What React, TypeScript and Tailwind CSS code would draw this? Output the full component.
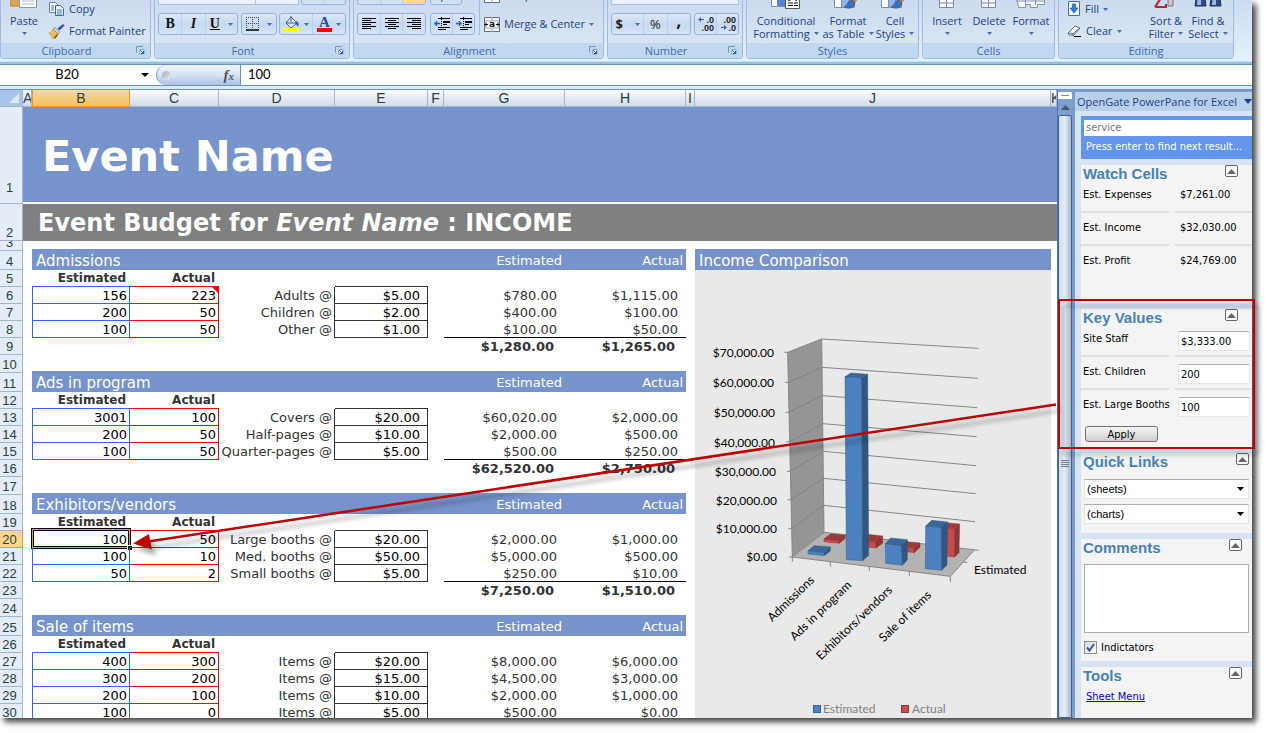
import React from "react";

const RIBBON_FONT = "font-['Open_Sans','Noto_Sans',sans-serif]";

function Tri({ className = "fill-[#4a6fa8]" }: { className?: string }) {
  return (
    <svg width="5" height="3" viewBox="0 0 5 3" className={`shrink-0 ${className}`} aria-hidden="true">
      <path d="M0 0h5L2.5 3z" />
    </svg>
  );
}

function Launcher() {
  return (
    <svg width="9" height="9" viewBox="0 0 9 9" fill="none" aria-hidden="true">
      <path d="M.5 6.500V.5H6.500" stroke="#6f93c0" />
      <path d="M4 3.500h4v4.500H3.500z" fill="#f4f9ff" stroke="#7f9fc8" />
      <path d="M4 4l3.500 3.500M7.500 5v2.500H5" stroke="#2e5c96" />
    </svg>
  );
}

function Group({ title, width, launcher, children }: { title: string; width: string; launcher?: boolean; children: React.ReactNode }) {
  return (
    <section className={`flex h-[74px] shrink-0 flex-col overflow-hidden rounded-[3px] border border-[#9dbbe0] bg-gradient-to-b from-[#c8d8ed] to-[#dbe8f5] ${width}`}>
      <div className="flex min-h-0 flex-1 items-end px-[3px] pb-[8px]">{children}</div>
      <div className={`relative flex h-[15px] shrink-0 items-center justify-center bg-[#c1d8f0] text-[11px] leading-[15px] text-[#3e6aaa] ${launcher ? "pr-[18px]" : ""}`}>
        <span>{title}</span>
        {launcher && (
          <button aria-label={`${title} settings`} className="absolute right-[5px] top-[3px]">
            <Launcher />
          </button>
        )}
      </div>
    </section>
  );
}

function Cluster({ width, short, children }: { width: string; short?: boolean; children?: React.ReactNode }) {
  return (
    <div className={`flex items-stretch divide-x divide-[#b9cfea] overflow-hidden rounded-[3px] border border-[#94b3dc] bg-gradient-to-b from-[#dce8f7] via-[#c6d9f0] to-[#d5e4f5] ${short ? "h-[20px]" : "h-[22px]"} ${width}`}>
      {children}
    </div>
  );
}

function Tool({ label, children, className = "" }: { label: string; children: React.ReactNode; className?: string }) {
  return (
    <button aria-label={label} className={`flex flex-1 items-center justify-center gap-1 ${className}`}>
      {children}
    </button>
  );
}

function Lines({ widths, align }: { widths: number[]; align: "l" | "c" | "r" }) {
  return (
    <svg width="14" height="12" viewBox="0 0 14 12" aria-hidden="true">
      {widths.map((w, i) => (
        <rect key={i} x={align === "l" ? 0 : align === "r" ? 14 - w : (14 - w) / 2} y={i * 2} width={w} height="1" fill="#000" />
      ))}
    </svg>
  );
}

function Indent({ flip }: { flip?: boolean }) {
  return (
    <svg width="16" height="14" viewBox="0 0 16 14" aria-hidden="true">
      <path d="M7.500 0v14" stroke="#000" strokeDasharray="1 1" />
      <path d="M4 1.500h12M9 4.500h7M9 7.500h4M4 10.500h12M4 12.500h8" stroke="#000" />
      <path d="M9 4h7v2H9z" />
      <path d={flip ? "M6 6.500L3 4v2H0v1h3v2z" : "M0 6.500L3 4v2h3v1H3v2z"} fill="#2f63c0" stroke="#2f63c0" strokeWidth=".5" />
    </svg>
  );
}

function BigButton({ lines, icon, arrowBelow, width }: { lines: string[]; icon: React.ReactNode; arrowBelow?: boolean; width: string }) {
  return (
    <button className={`flex flex-col items-center text-[11px] leading-[13px] text-[#1b3f84] ${width}`}>
      <span className="mb-[5px] flex h-[30px] items-end">{icon}</span>
      <span className="whitespace-nowrap">{lines[0]}</span>
      <span className="flex h-[13px] items-center gap-1 whitespace-nowrap">
        {!arrowBelow && lines[1]}
        <Tri />
      </span>
    </button>
  );
}

function GridIcon({ brush }: { brush?: boolean }) {
  return (
    <svg width="28" height="26" viewBox="0 0 28 26" aria-hidden="true">
      <path d="M.5.5h20v24H.5z" fill="#fff" stroke="#7e8fae" />
      <path d="M8 8h12v16H8z" fill="#8fb4ea" />
      <path d="M.5 8h20M.5 16h20M7.500.5v24M14.500.5v24" stroke="#7e8fae" fill="none" />
      {brush && (
        <>
          <path d="M27 8L17 18l3 3 8-10z" fill="#c77a3c" />
          <path d="M18 17c-4 0-4 5-8 7 4 2 10 2 11-4z" fill="#3f6fb5" stroke="#2a4f8d" strokeWidth=".6" />
        </>
      )}
    </svg>
  );
}

function CondIcon() {
  return (
    <svg width="30" height="26" viewBox="0 0 30 26" aria-hidden="true">
      <path d="M.5.5h22v23H.5z" fill="#fff" stroke="#7e8fae" />
      <path d="M6 0h8v23H6z" fill="#4f82dc" />
      <path d="M14.500 11.500h14v14h-14z" fill="#fff" stroke="#555" />
      <path d="M17 14l4 2-4 2M17 20h5M17 22.500h5M26 14l-3 2 3 2M23 20h4M23 22.500h4" stroke="#111" fill="none" />
    </svg>
  );
}

function CellsIcon({ wide }: { wide?: boolean }) {
  return wide ? (
    <svg width="32" height="26" viewBox="0 0 32 26" aria-hidden="true">
      <path d="M1.500 14.500h28v7h-7v3h-7v-3h-5v3h-7z" fill="#f5f8fd" stroke="#8592a8" />
      <path d="M10.500 14v8M20.500 14v8M1 18h29" stroke="#8592a8" />
    </svg>
  ) : (
    <svg width="16" height="26" viewBox="0 0 16 26" aria-hidden="true">
      <path d="M.5 8.500h14v16H.5z" fill="#f8fafd" stroke="#7c8ba5" />
      <path d="M.5 20h14M7.500 8v16" stroke="#7c8ba5" />
    </svg>
  );
}

function Ribbon() {
  return (
    <header className={`flex h-[61px] shrink-0 items-end gap-[3px] overflow-hidden bg-gradient-to-b from-[#cbdcf0] to-[#e4f1fd] pb-[2px] ${RIBBON_FONT}`}>
      <Group title="Clipboard" width="w-[151px]" launcher>
        <div className="-mb-[5px] flex flex-1 items-end">
          <BigButton
            width="w-[40px]"
            lines={["Paste"]}
            arrowBelow
            icon={
              <svg width="28" height="26" viewBox="0 0 28 26" aria-hidden="true">
                <path d="M0 0h22v23H0z" fill="#dba653" stroke="#b5812f" />
                <path d="M9.500 4.500h17v20h-17z" fill="#fff" stroke="#8a97b0" />
                <path d="M12 9h12M12 12h12M12 15h12M12 18h12M12 21h12" stroke="#a9b7d0" />
              </svg>
            }
          />
          <div className="-mb-[2px] ml-[5px] flex flex-col text-[11px] leading-[22px] text-[#1b3f84]">
            <button className="flex h-[22px] items-center gap-[5px]">
              <svg width="15" height="14" viewBox="0 0 15 14" aria-hidden="true">
                <path d="M.5.5h6l2 2v8h-8z" fill="#fff" stroke="#5c7fb8" />
                <path d="M6.500 3.500h5l3 3v7h-8z" fill="#e9f1fc" stroke="#3f67a8" />
                <path d="M2 4h3M2 6h3M2 8h3M8 8h5M8 10h5M8 12h5" stroke="#4b79c4" />
              </svg>
              Copy
            </button>
            <button className="flex h-[22px] items-center gap-[4px] whitespace-nowrap">
              <svg width="16" height="15" viewBox="0 0 16 15" aria-hidden="true">
                <path d="M14 0l1.500 1.500-5 5-2-2z" fill="#3d4f94" />
                <path d="M6 3l5 5-2 2-5-5z" fill="#c4cad6" stroke="#77809a" strokeWidth=".6" />
                <path d="M4 5l5 5c-1 3-3 4-5 5-1-3-3-5-4-6 2 0 3-2 4-4z" fill="#f0c14c" stroke="#b4802c" strokeWidth=".6" />
                <path d="M5 13l3-3 1 1-3 4z" fill="#8a4e1c" />
              </svg>
              Format Painter
            </button>
          </div>
        </div>
      </Group>

      <Group title="Font" width="w-[196px]" launcher>
        <div className="flex flex-1 flex-col gap-2">
          <div className="flex justify-between">
            <div className="flex h-[20px] border border-[#a9c2e3] bg-[#eaf2fb]">
              <span className="w-[97px] border-r border-[#a9c2e3]" />
              <span className="w-[42px]" />
            </div>
            <Cluster width="w-[45px]" short>
              <Tool label="Grow font" className="font-['Liberation_Serif',serif] text-[15px] font-bold">A</Tool>
              <Tool label="Shrink font" className="font-['Liberation_Serif',serif] text-[13px] font-bold">A</Tool>
            </Cluster>
          </div>
          <div className="flex justify-between font-['Liberation_Serif',serif] text-[14px] leading-none text-[#111]">
            <Cluster width="w-[80px]">
              <Tool label="Bold"><b>B</b></Tool>
              <Tool label="Italic"><b><i>I</i></b></Tool>
              <Tool label="Underline" className="grow-[1.4]"><b className="underline">U</b><Tri className="ml-1 fill-[#4a6fa8]" /></Tool>
            </Cluster>
            <Cluster width="w-[36px]">
              <Tool label="Borders">
                <svg width="13" height="14" viewBox="0 0 13 14" aria-hidden="true">
                  <path d="M0 .5h13M0 6.500h13M.5 0v12M6.500 0v12M12.500 0v12" stroke="#444" strokeDasharray="1 1" />
                  <path d="M0 13h13" stroke="#000" strokeWidth="1.500" />
                </svg>
                <Tri className="ml-1 fill-[#4a6fa8]" />
              </Tool>
            </Cluster>
            <Cluster width="w-[67px]">
              <Tool label="Fill color">
                <svg width="17" height="16" viewBox="0 0 17 16" aria-hidden="true">
                  <path d="M8 1l6 6-6 5-5-5z" fill="#dfe9f6" stroke="#3c5f96" />
                  <path d="M8 0v6M3 7h11" stroke="#3c5f96" />
                  <path d="M13 5c3 1 3 3 2 6-1-2-2-3-3-3z" fill="#2f66b8" />
                  <path d="M0 12h16v4H0z" fill="#ff0" />
                </svg>
                <Tri />
              </Tool>
              <Tool label="Font color">
                <span className="flex flex-col items-center">
                  <b className="h-[12px] text-[15px] leading-[12px] text-[#26508f]">A</b>
                  <span className="h-[4px] w-[15px] bg-[#f00]" />
                </span>
                <Tri />
              </Tool>
            </Cluster>
          </div>
        </div>
      </Group>

      <Group title="Alignment" width="w-[251px]" launcher>
        <div className="flex flex-1 items-end gap-[4px]">
          <div className="flex flex-col gap-2">
            <div className="flex gap-[4px]">
              <Cluster width="w-[69px]" short>
                <span className="flex-1" />
                <span className="flex-1" />
                <span className="flex flex-1 items-end justify-center bg-[#fbd98c] pb-[4px]"><span className="h-px w-[12px] bg-black" /></span>
              </Cluster>
              <Cluster width="w-[32px]" short>
                <Tool label="Orientation">
                  <svg width="12" height="16" viewBox="0 0 12 16" aria-hidden="true"><path d="M1 15L10 3M6 3h4v4" fill="none" stroke="#444" /></svg>
                </Tool>
              </Cluster>
            </div>
            <div className="flex gap-[4px]">
              <Cluster width="w-[69px]">
                <Tool label="Align left"><Lines align="l" widths={[14, 9, 14, 9, 14, 9]} /></Tool>
                <Tool label="Align center"><Lines align="c" widths={[14, 8, 14, 8, 14, 8]} /></Tool>
                <Tool label="Align right"><Lines align="r" widths={[14, 9, 14, 9, 14, 9]} /></Tool>
              </Cluster>
              <Cluster width="w-[45px]">
                <Tool label="Decrease indent"><Indent /></Tool>
                <Tool label="Increase indent"><Indent flip /></Tool>
              </Cluster>
            </div>
          </div>
          <div className="h-[60px] w-px bg-[#9dbbe0]" />
          <div className="flex flex-col gap-2 text-[11px] leading-[22px] text-[#1b3f84]">
            <button className="flex h-[20px] items-center gap-1"><MergeIcon />Wrap Text</button>
            <button className="flex h-[22px] items-center gap-1 whitespace-nowrap">
              <MergeIcon />
              Merge &amp; Center
              <Tri />
            </button>
          </div>
        </div>
      </Group>

      <Group title="Number" width="w-[136px]" launcher>
        <div className="flex flex-1 flex-col gap-2">
          <div className="h-[20px] border border-[#a9c2e3] bg-[#eaf2fb]" />
          <div className="flex justify-between text-[13px] leading-none text-[#222]">
            <Cluster width="w-[80px]">
              <Tool label="Currency" className="grow-[1.4]"><b>$</b><Tri className="ml-2 fill-[#4a6fa8]" /></Tool>
              <Tool label="Percent">%</Tool>
              <Tool label="Comma" className="pb-[8px] text-[18px]"><b>,</b></Tool>
            </Cluster>
            <Cluster width="w-[45px]">
              <Tool label="Increase decimal"><Decimals /></Tool>
              <Tool label="Decrease decimal"><Decimals less /></Tool>
            </Cluster>
          </div>
        </div>
      </Group>

      <Group title="Styles" width="w-[173px]">
        <div className="-mb-[5px] flex flex-1 items-end justify-between">
          <BigButton width="w-[72px]" lines={["Conditional", "Formatting"]} icon={<CondIcon />} />
          <BigButton width="w-[52px]" lines={["Format", "as Table"]} icon={<GridIcon brush />} />
          <BigButton width="w-[42px]" lines={["Cell", "Styles"]} icon={<GridIcon brush />} />
        </div>
      </Group>

      <Group title="Cells" width="w-[133px]">
        <div className="-mb-[5px] flex flex-1 items-end justify-between">
          <BigButton width="w-[42px]" lines={["Insert"]} arrowBelow icon={<CellsIcon />} />
          <BigButton width="w-[42px]" lines={["Delete"]} arrowBelow icon={<CellsIcon />} />
          <BigButton width="w-[42px]" lines={["Format"]} arrowBelow icon={<CellsIcon wide />} />
        </div>
      </Group>

      <Group title="Editing" width="w-[176px]">
        <div className="-mb-[5px] flex flex-1 items-end">
          <div className="-mb-[2px] ml-[5px] flex w-[78px] flex-col text-[11px] leading-[22px] text-[#1b3f84]">
            <button className="flex h-[22px] items-center gap-1">
              <svg width="14" height="16" viewBox="0 0 14 16" aria-hidden="true">
                <path d="M1.500.5h11v14h-11z" fill="#eef4fc" stroke="#4a6ea9" />
                <path d="M5.500 3h3v4h2.500L7 12 3 7h2.500z" fill="#3b78d8" stroke="#1e4f9f" strokeWidth=".6" />
              </svg>
              Fill
              <Tri />
            </button>
            <button className="flex h-[22px] items-center gap-1">
              <svg width="15" height="12" viewBox="0 0 15 12" aria-hidden="true">
                <path d="M1 8l7-7 5 2-6 7H2z" fill="#fff" stroke="#5d6b80" />
                <path d="M1 8l5 .5L13 3M6 8.500V11" stroke="#5d6b80" fill="none" />
                <path d="M7 11.500h7" stroke="#000" />
              </svg>
              Clear
              <Tri />
            </button>
          </div>
          <BigButton
            width="w-[42px]"
            lines={["Sort &", "Filter"]}
            icon={
              <svg width="24" height="26" viewBox="0 0 24 26" aria-hidden="true">
                <path d="M1 24l8-12H2v-2h11M1 24h11v-3" fill="none" stroke="#b02a30" strokeWidth="2.200" />
                <path d="M14 12h5v11h-5z" fill="#c9c9c9" stroke="#777" />
              </svg>
            }
          />
          <BigButton
            width="w-[42px]"
            lines={["Find &", "Select"]}
            icon={
              <svg width="28" height="26" viewBox="0 0 28 26" aria-hidden="true">
                <path d="M3 8h7l2 15H1zM18 8h7l2 15H16z" fill="#2c4a80" stroke="#1b3059" />
                <path d="M4 10h3v12H3zM19 10h3v12h-4z" fill="#9db6dc" />
              </svg>
            }
          />
        </div>
      </Group>
    </header>
  );
}

function MergeIcon() {
  return (
    <svg width="16" height="15" viewBox="0 0 16 15" className="shrink-0" aria-hidden="true">
      <path d="M.5.5h15v14H.5z" fill="#fff" stroke="#666f80" />
      <path d="M1 4h14M1 11h14M8 0v4M8 11v4" stroke="#8fa6c8" />
      <path d="M0 7.500h4M12 7.500h4M2 5.500v4M14 5.500v4" stroke="#111" />
      <text x="8" y="10" textAnchor="middle" fontSize="9" fontWeight="700" fontFamily="DejaVu Sans" fill="#111">a</text>
    </svg>
  );
}

function Decimals({ less }: { less?: boolean }) {
  return (
    <svg width="18" height="16" viewBox="0 0 18 16" className="font-['Liberation_Sans',sans-serif] text-[9px]" aria-hidden="true">
      <text x="17" y="7" textAnchor="end" fill="#222" fontWeight="700">{less ? ".00" : ".0"}</text>
      <text x="17" y="15" textAnchor="end" fill="#222" fontWeight="700">{less ? ".0" : ".00"}</text>
      <path d={less ? "M8 11.500L5 9v2H2v1h3v2z" : "M1 3.500L4 1v2h3v1H4v2z"} fill="#2f63c0" />
    </svg>
  );
}

function FormulaBar() {
  return (
    <div className="flex h-[28px] shrink-0 flex-col border-t-2 border-[#9dbde3]">
      <div className="flex h-[22px] border-y border-[#6a93c4] bg-white font-['Lato',sans-serif] text-[13px] text-black">
        <input aria-label="Name box" defaultValue="B20" className="w-[134px] text-center" />
        <button aria-label="Open name list" className="flex w-[22px] items-center justify-center">
          <svg width="8" height="4" viewBox="0 0 8 4" aria-hidden="true"><path d="M0 0h8L4 4z" /></svg>
        </button>
        <div className="flex w-[85px] items-center justify-between rounded-l-full border-x border-[#6a93c4] bg-gradient-to-b from-[#f3f7fc] via-[#d7e3f3] to-[#a9c2e4] pl-[5px] pr-[6px]">
          <span className="h-[9px] w-[9px] rounded-full bg-gradient-to-br from-[#a2a9b5] to-[#eef1f6]" />
          <button aria-label="Insert function" className="font-['Liberation_Serif',serif] text-[15px] font-bold italic leading-none text-[#555]">
            f<span className="text-[11px]">x</span>
          </button>
        </div>
        <input aria-label="Formula" defaultValue="100" className="min-w-0 flex-1 pl-[7px]" />
      </div>
      <div className="h-[4px] border-b border-[#6a93c4] bg-[#dfe9f4]" />
    </div>
  );
}

type Item = { est: string; act: string; label: string; price: string; e: string; a: string };
type Section = { title: string; first: number; items: Item[]; totals?: [string, string] };

const it = (est: string, act: string, label: string, price: string, e: string, a: string): Item => ({ est, act, label, price, e, a });

const SECTIONS: Section[] = [
  {
    title: "Admissions",
    first: 4,
    items: [
      it("156", "223", "Adults @", "$5.00", "$780.00", "$1,115.00"),
      it("200", "50", "Children @", "$2.00", "$400.00", "$100.00"),
      it("100", "50", "Other @", "$1.00", "$100.00", "$50.00"),
    ],
    totals: ["$1,280.00", "$1,265.00"],
  },
  {
    title: "Ads in program",
    first: 11,
    items: [
      it("3001", "100", "Covers @", "$20.00", "$60,020.00", "$2,000.00"),
      it("200", "50", "Half-pages @", "$10.00", "$2,000.00", "$500.00"),
      it("100", "50", "Quarter-pages @", "$5.00", "$500.00", "$250.00"),
    ],
    totals: ["$62,520.00", "$2,750.00"],
  },
  {
    title: "Exhibitors/vendors",
    first: 18,
    items: [
      it("100", "50", "Large booths @", "$20.00", "$2,000.00", "$1,000.00"),
      it("100", "10", "Med. booths @", "$50.00", "$5,000.00", "$500.00"),
      it("50", "2", "Small booths @", "$5.00", "$250.00", "$10.00"),
    ],
    totals: ["$7,250.00", "$1,510.00"],
  },
  {
    title: "Sale of items",
    first: 25,
    items: [
      it("400", "300", "Items @", "$20.00", "$8,000.00", "$6,000.00"),
      it("300", "200", "Items @", "$15.00", "$4,500.00", "$3,000.00"),
      it("200", "100", "Items @", "$10.00", "$2,000.00", "$1,000.00"),
      it("100", "0", "Items @", "$5.00", "$500.00", "$0.00"),
    ],
  },
];

const HEAD_CELL = "border-b border-r pr-[3px] text-center font-['Liberation_Sans',sans-serif] text-[13px] font-normal leading-[15px]";

function RowHead({ n, className = "" }: { n: number; className?: string }) {
  const active = n === 20;
  return (
    <th
      scope="row"
      className={`${HEAD_CELL} align-bottom text-[#27413e] ${active ? "border-[#f29536] bg-[#ffd58d]" : "border-[#9eb6ce] bg-[#e4ecf7]"} ${className}`}
    >
      {n}
    </th>
  );
}

const BAND = "bg-[#7693cb] shadow-[0_-2px_0_#7693cb] text-white";
const BOXED = "border-b pt-px leading-[15px]";

function SectionRows({ s }: { s: Section }) {
  const f = s.first;
  return (
    <>
      <tr className="h-[19px]">
        <RowHead n={f} />
        <td />
        <td colSpan={5} className={`${BAND} pl-[4px] text-left text-[15px] leading-[18px]`}>{s.title}</td>
        <td className={`${BAND} pr-[3px] leading-[18px]`}>Estimated</td>
        <td className={`${BAND} pr-[3px] leading-[18px]`}>Actual</td>
        <td />
        {f === 4 && <td className={`${BAND} pl-[4px] text-left text-[15px] leading-[18px]`}>Income Comparison</td>}
        {f === 4 && <td />}
      </tr>
      <tr className="h-[17px]">
        <RowHead n={f + 1} />
        <td />
        <td className={`${BOXED} border-[#3366ff] pr-[4px] text-[12px] font-bold`}>Estimated</td>
        <td className={`${BOXED} border-[#ff0000] pr-[4px] text-[12px] font-bold`}>Actual</td>
        <td />
        <td className="border-b border-[#333]" />
        <td colSpan={4} />
        {f === 4 && (
          <td rowSpan={26} className="bg-[#e9e9e9] align-top">
            <Chart />
          </td>
        )}
      </tr>
      {s.items.map((r, i) => {
        const sum = i === 2 && s.totals ? `${BOXED} border-black` : "";
        const selected = f + 2 + i === 20;
        return (
          <tr key={i} className="h-[17px]">
            <RowHead n={f + 2 + i} />
            <td />
            <td className={`${BOXED} relative border-x border-[#3366ff] pr-[2px] text-black`}>
              {r.est}
              {selected && (
                <span className="pointer-events-none absolute -inset-x-[2px] -bottom-[2px] -top-[3px] border-[3px] border-black outline-1 -outline-offset-2 outline-[#d9a520]">
                  <span className="absolute -bottom-[4px] -right-[4px] h-[5px] w-[5px] border-l border-t border-white bg-black" />
                </span>
              )}
            </td>
            <td className={`${BOXED} relative border-r border-[#ff0000] pr-[2px] text-black`}>
              {r.act}
              {f === 4 && i === 0 && (
                <svg className="absolute right-0 top-0" width="6" height="6" viewBox="0 0 6 6" aria-hidden="true"><path d="M0 0h6v6z" fill="#f00" /></svg>
              )}
            </td>
            <td className="whitespace-nowrap border-r border-[#333] pr-[2px]">{r.label}</td>
            <td className={`${BOXED} border-r border-[#333] pr-[7px] text-black`}>{r.price}</td>
            <td />
            <td className={`pr-[8px] ${sum}`}>{r.e}</td>
            <td className={`pr-[8px] ${sum}`}>{r.a}</td>
            <td />
          </tr>
        );
      })}
      {s.totals && (
        <>
          <tr className="h-[17px] font-bold">
            <RowHead n={f + 5} />
            <td colSpan={6} />
            <td className="pr-[11px]">{s.totals[0]}</td>
            <td className="pr-[11px]">{s.totals[1]}</td>
            <td />
          </tr>
          <tr className="h-[18px]">
            <RowHead n={f + 6} />
            <td colSpan={9} />
          </tr>
        </>
      )}
    </>
  );
}

const COLUMNS = ["A", "B", "C", "D", "E", "F", "G", "H", "I", "J", "K"];

function Sheet() {
  return (
    <div className="min-w-0 flex-1 overflow-hidden bg-white">
      <table className="w-full table-fixed border-separate border-spacing-0 text-right font-['DejaVu_Sans',sans-serif] text-[13px] leading-[16px] text-[#333]">
        <colgroup>
          <col className="w-[23px]" />
          <col className="w-[9px]" />
          <col className="w-[98px]" />
          <col className="w-[89px]" />
          <col className="w-[116px]" />
          <col className="w-[93px]" />
          <col className="w-[16px]" />
          <col className="w-[121px]" />
          <col className="w-[121px]" />
          <col className="w-[9px]" />
          <col />
          <col className="w-[6px]" />
        </colgroup>
        <thead>
          <tr className="h-[17px] font-['Liberation_Sans',sans-serif] text-[14px] text-[#27413e]">
            <th className="border-b border-r border-[#9eb6ce] bg-[#a9c4e9]" aria-label="Select all">
              <svg className="ml-auto mr-[3px]" width="10" height="10" viewBox="0 0 10 10" aria-hidden="true"><path d="M10 0v10H0z" fill="#dfe9f5" /></svg>
            </th>
            {COLUMNS.map((c) => (
              <th
                key={c}
                scope="col"
                className={
                  c === "B"
                    ? "overflow-hidden border-x border-b border-[#f29536] bg-gradient-to-b from-[#f9d99f] to-[#f1c15f] text-center font-normal"
                    : "overflow-hidden border-b border-r border-[#9eb6ce] bg-gradient-to-b from-[#f9fcfd] to-[#d3dbe9] text-center font-normal"
                }
              >
                {c}
              </th>
            ))}
          </tr>
        </thead>
        <tbody>
          <tr className="h-[97px]">
            <RowHead n={1} className="pb-[8px]" />
            <td colSpan={11} className="border-b-2 border-white bg-[#7693cb] pl-[19px] pt-[2px] text-left text-[43px] font-bold leading-[50px] text-white">Event Name</td>
          </tr>
          <tr className="h-[37px]">
            <RowHead n={2} />
            <td colSpan={11} className="bg-[#808080] pl-[15px] text-left text-[24px] font-bold leading-[30px] text-white">
              Event Budget for <i>Event Name</i> : INCOME
            </td>
          </tr>
          <tr className="h-[10px]">
            <th scope="row" className={`${HEAD_CELL} border-[#9eb6ce] bg-[#e4ecf7] text-[#27413e]`}>
              <div className="flex h-[9px] items-end justify-center overflow-hidden">3</div>
            </th>
            <td colSpan={11} />
          </tr>
          {SECTIONS.map((s) => (
            <SectionRows key={s.title} s={s} />
          ))}
        </tbody>
      </table>
    </div>
  );
}

const AXIS: [string, number, number][] = [
  ["$70,000.00", 79, 87],
  ["$60,000.00", 79, 117],
  ["$50,000.00", 80, 147],
  ["$40,000.00", 80, 177],
  ["$30,000.00", 81, 206],
  ["$20,000.00", 82, 235],
  ["$10,000.00", 82, 263],
  ["$0.00", 82, 291],
];

const CATEGORIES: [string, number, number][] = [
  ["Admissions", 120, 311],
  ["Ads in program", 157, 316],
  ["Exhibitors/vendors", 198, 321],
  ["Sale of items", 237, 326],
];

const GRID = [
  [293, 97, 395, 57, 865, 85],
  [295, 187, 395, 142, 864, 175],
  [297, 277, 397, 227, 862, 263],
  [299, 365, 399, 311, 860, 350],
  [301, 454, 400, 394, 858, 437],
  [303, 539, 401, 475, 857, 521],
  [305, 626, 401, 556, 855, 605],
  [307, 711, 402, 637, 866, 691],
];

function Bar({ top, front, side, red }: { top: string; front: string; side: string; red?: boolean }) {
  return (
    <g strokeWidth="1.500" strokeLinejoin="round">
      <polygon points={front} fill={red ? "#c84b4b" : "#4c80bf"} stroke={red ? "#9c3437" : "#386396"} />
      <polygon points={side} fill={red ? "#8e3537" : "#315780"} stroke={red ? "#8e3537" : "#315780"} />
      <polygon points={top} fill={red ? "#9c3a3c" : "#3c6899"} stroke={red ? "#8e3537" : "#315780"} />
    </g>
  );
}

function Chart() {
  return (
    <svg width="356" height="448" viewBox="0 0 356 448" className="block font-['Lato',sans-serif] text-[12px]" role="img" aria-label="Income Comparison">
      <g transform="translate(-5 50) scale(.33333)">
        <polygon points="293,97 395,57 402,637 307,711" fill="#959595" />
        <polygon points="307,711 402,637 853,690 781,769" fill="#b3b3b3" />
        {GRID.map(([x1, y1, x2, y2, x3, y3]) => (
          <g key={y1} fill="none" strokeWidth="3">
            <path d={`M${x2} ${y2}L${x3} ${y3}`} stroke="#868686" />
            <path d={`M${x1} ${y1}L${x2} ${y2}`} stroke="#828282" />
            <path d={`M${x1 - 10} ${y1}h10`} stroke="#868686" />
          </g>
        ))}
        <path d="M293 97L307 711 781 769 853 690M307 711v15M421 725v15M538 740v14M658 754v14M781 769v17M820 727h12M395 57L402 637" fill="none" stroke="#868686" strokeWidth="3" />
        <Bar red top="402,657 422,641 466,646 448,662" front="402,657 448,662 448,670 402,665" side="448,662 466,646 466,655 448,670" />
        <Bar red top="512,660 533,643 578,648 558,664" front="512,660 558,664 558,684 512,679" side="558,664 578,648 578,670 558,684" />
        <Bar red top="628,678 646,665 690,669 673,684" front="628,680 673,684 673,698 628,692" side="673,684 690,669 690,682 673,698" />
        <Bar red top="748,622 766,608 809,612 794,627" front="748,622 794,627 794,711 748,706" side="794,627 809,612 807,698 794,711" />
        <Bar top="354,692 372,677 421,681 403,697" front="354,692 403,697 403,707 354,702" side="403,697 421,681 421,693 403,707" />
        <Bar top="465,170 483,159 533,163 515,174" front="465,170 515,174 518,722 469,719" side="515,174 533,163 536,706 518,722" />
        <Bar top="586,671 602,654 652,659 635,677" front="586,671 635,677 637,736 587,730" side="635,677 652,659 652,720 637,736" />
        <Bar top="707,618 725,601 773,606 755,622" front="707,618 755,622 755,751 706,746" side="755,622 773,606 771,735 755,751" />
      </g>
      {AXIS.map(([t, x, y]) => (
        <text key={t} x={x} y={y} textAnchor="end">{t}</text>
      ))}
      {CATEGORIES.map(([t, x, y]) => (
        <text key={t} x={x} y={y} textAnchor="end" transform={`rotate(-44 ${x} ${y})`}>{t}</text>
      ))}
      <text x="279" y="304">Estimated</text>
      <rect x="118.500" y="435.500" width="7" height="7" fill="#4c80bf" stroke="#386396" />
      <text x="128" y="443" fill="#7f7f7f">Estimated</text>
      <rect x="206.500" y="435.500" width="7" height="7" fill="#c84b4b" stroke="#9c3437" />
      <text x="217" y="443" fill="#7f7f7f">Actual</text>
    </svg>
  );
}

function Scrollbar() {
  return (
    <div className="flex w-[15px] shrink-0 flex-col border-l border-[#4a74b8] bg-[#7f9fcb]">
      <div className="mt-[2px] flex h-[7px] items-center justify-center rounded-[1px] bg-white"><span className="h-px w-[8px] bg-[#7691b8]" /></div>
      <button aria-label="Scroll up" className="flex h-[16px] items-center justify-center">
        <svg width="9" height="5" viewBox="0 0 9 5" aria-hidden="true"><path d="M4.500 0L9 5H0z" fill="#3f5575" /></svg>
      </button>
      <div className="flex flex-1 justify-center rounded-t-[2px] border border-[#48628c] bg-gradient-to-r from-[#cfdcec] via-[#e6ecf4] to-[#a3b7d0] pt-[344px]">
        <span className="h-[8px] w-[8px] bg-[repeating-linear-gradient(#6d7f97_0_1px,transparent_1px_2px)]" />
      </div>
    </div>
  );
}

function Panel({ title, inset, children, className = "" }: { title: string; inset: string; children: React.ReactNode; className?: string }) {
  return (
    <section className={`bg-[#f4f4f4] ${className}`}>
      <div className="flex h-[15px] items-start justify-between pl-[2px]">
        <h2 className="font-['Liberation_Sans',sans-serif] text-[15px] font-bold leading-[18px] text-[#4682b4]">{title}</h2>
        <button aria-label={`Collapse ${title}`} className={`flex h-[12px] w-[13px] items-center justify-center rounded-[2px] border border-[#666] bg-white ${inset}`}>
          <svg width="9" height="5" viewBox="0 0 9 5" aria-hidden="true"><path d="M4.500 0L9 5H0z" fill="#666" /></svg>
        </button>
      </div>
      {children}
    </section>
  );
}

function PaneRow({ label, htmlFor, last, children }: { label: string; htmlFor?: string; last?: boolean; children: React.ReactNode }) {
  const line = last ? "" : "border-b-2 border-[#e0e0e0]";
  return (
    <div className="grid h-[33px] grid-cols-[88px_1fr] gap-x-[6px]">
      <div className={`whitespace-nowrap pl-[2px] pt-[7px] ${line}`}>
        {htmlFor ? <label htmlFor={htmlFor}>{label}</label> : label}
      </div>
      <div className={line}>{children}</div>
    </div>
  );
}

const WATCH: [string, string][] = [
  ["Est. Expenses", "$7,261.00"],
  ["Est. Income", "$32,030.00"],
  ["Est. Profit", "$24,769.00"],
];
const KEYS: [string, string][] = [
  ["Site Staff", "$3,333.00"],
  ["Est. Children", "200"],
  ["Est. Large Booths", "100"],
];

function Pick({ label }: { label: string }) {
  return (
    <div className="relative mx-[3px]">
      <select aria-label={label} className="block h-[20px] w-full appearance-none border border-[#dfe3ea] border-t-[#abadb3] bg-white pl-[2px] font-['Liberation_Sans',sans-serif] text-[11px] leading-[18px]">
        <option>{label}</option>
      </select>
      <svg className="pointer-events-none absolute right-[5px] top-[8px]" width="7" height="4" viewBox="0 0 7 4" aria-hidden="true"><path d="M0 0h7L3.500 4z" /></svg>
    </div>
  );
}

function PowerPane() {
  return (
    <aside className="flex w-[180px] shrink-0 flex-col overflow-hidden border-l-[3px] border-[#7b9bc9] bg-[#d6e4f2] font-['DejaVu_Sans_Condensed','DejaVu_Sans',sans-serif] text-[11px] leading-[16px] text-black">
      <div className={`flex h-[21px] shrink-0 items-center justify-between border-t-2 border-[#7b9bc9] bg-[#b9d0ea] pl-[2px] text-[11px] text-[#1b3f84] ${RIBBON_FONT}`}>
        <span className="whitespace-nowrap">OpenGate PowerPane for Excel</span>
        <button aria-label="Pane menu">
          <svg width="8" height="5" viewBox="0 0 8 5" aria-hidden="true"><path d="M0 0h8L4 5z" fill="#1b3f84" /></svg>
        </button>
      </div>
      <div className="mt-[5px] flex flex-col gap-[6px] pl-[6px]">
        <div className="h-[43px] bg-[#6495ed] pl-[3px] pt-[4px]">
          <input aria-label="Search" defaultValue="service" className="block h-[16px] w-full bg-white pl-[2px] text-[#777]" />
          <p className="whitespace-nowrap pl-[2px] pt-[3px] text-white">Press enter to find next result...</p>
        </div>
        <Panel title="Watch Cells" inset="mr-[14px]" className="h-[138px]">
          {WATCH.map(([l, v], i) => (
            <PaneRow key={l} label={l} last={i === 2}><div className="pl-[5px] pt-[7px]">{v}</div></PaneRow>
          ))}
        </Panel>
        <Panel title="Key Values" inset="mr-[14px]" className="h-[138px]">
          {KEYS.map(([l, v], i) => (
            <PaneRow key={l} label={l} htmlFor={`key-${i}`} last={i === 2}>
              <div className="pl-[3px] pr-[2px] pt-[7px]">
                <input id={`key-${i}`} defaultValue={v} className="block h-[20px] w-full rounded-[2px] border border-[#e2e6ee] border-t-[#abadb3] bg-white pl-[2px]" />
              </div>
            </PaneRow>
          ))}
          <button className="ml-[4px] mt-[3px] block h-[16px] w-[73px] rounded-[3px] border border-[#707070] bg-gradient-to-b from-[#f4f4f4] via-[#e4e4e4] to-[#cdcdcd] leading-[15px]">Apply</button>
        </Panel>
        <Panel title="Quick Links" inset="mr-[3px]" className="h-[80px]">
          <div className="mt-[11px] flex flex-col gap-[5px]">
            <Pick label="(sheets)" />
            <Pick label="(charts)" />
          </div>
        </Panel>
        <Panel title="Comments" inset="mr-[10px]" className="h-[122px]">
          <div className="px-[3px] pt-[10px]">
            <textarea aria-label="Comments" className="block h-[69px] w-full resize-none border border-[#abadb3] bg-white" />
            <label className="mt-[8px] flex h-[13px] items-center gap-[4px]">
              <input type="checkbox" defaultChecked className="peer sr-only" />
              <span className="flex h-[13px] w-[13px] items-center justify-center border border-[#8e8f8f] bg-gradient-to-br from-[#d5dae0] to-white">
                <svg width="9" height="9" viewBox="0 0 9 9" aria-hidden="true"><path d="M1 4.500l2.500 3L8 1" fill="none" stroke="#3b5897" strokeWidth="2" /></svg>
              </span>
              Indictators
            </label>
          </div>
        </Panel>
        <Panel title="Tools" inset="mr-[10px]" className="h-[80px]">
          <a href="#menu" className="ml-[5px] mt-[7px] inline-block text-[#0000ee] underline">Sheet Menu</a>
        </Panel>
      </div>
    </aside>
  );
}

function Callout() {
  return (
    <svg className="pointer-events-none absolute left-0 top-0 overflow-visible" width="1267" height="733" viewBox="0 0 1267 733" aria-hidden="true">
      <g style={{ filter: "drop-shadow(4px 6px 2px rgba(0,0,0,.3))" }}>
        <rect x="1059" y="300" width="195" height="148" fill="none" stroke="#c00000" strokeWidth="2" />
        <path d="M1056 404.500L145 542" stroke="#c00000" strokeWidth="2.600" />
        <path d="M133 543.500L149 534 152 549.500z" fill="#c00000" />
      </g>
    </svg>
  );
}

export default function App() {
  return (
    <div className="relative h-screen overflow-hidden bg-white pb-[15px] pr-[15px]">
      <main className="flex h-full flex-col overflow-hidden bg-[#7b9bc9] shadow-[4px_4px_6px_rgba(0,0,0,0.75)]">
        <Ribbon />
        <div className="h-px shrink-0 bg-[#b5eaf4]" />
        <FormulaBar />
        <div className="flex min-h-0 flex-1">
          <Sheet />
          <Scrollbar />
          <PowerPane />
        </div>
      </main>
      <Callout />
    </div>
  );
}
